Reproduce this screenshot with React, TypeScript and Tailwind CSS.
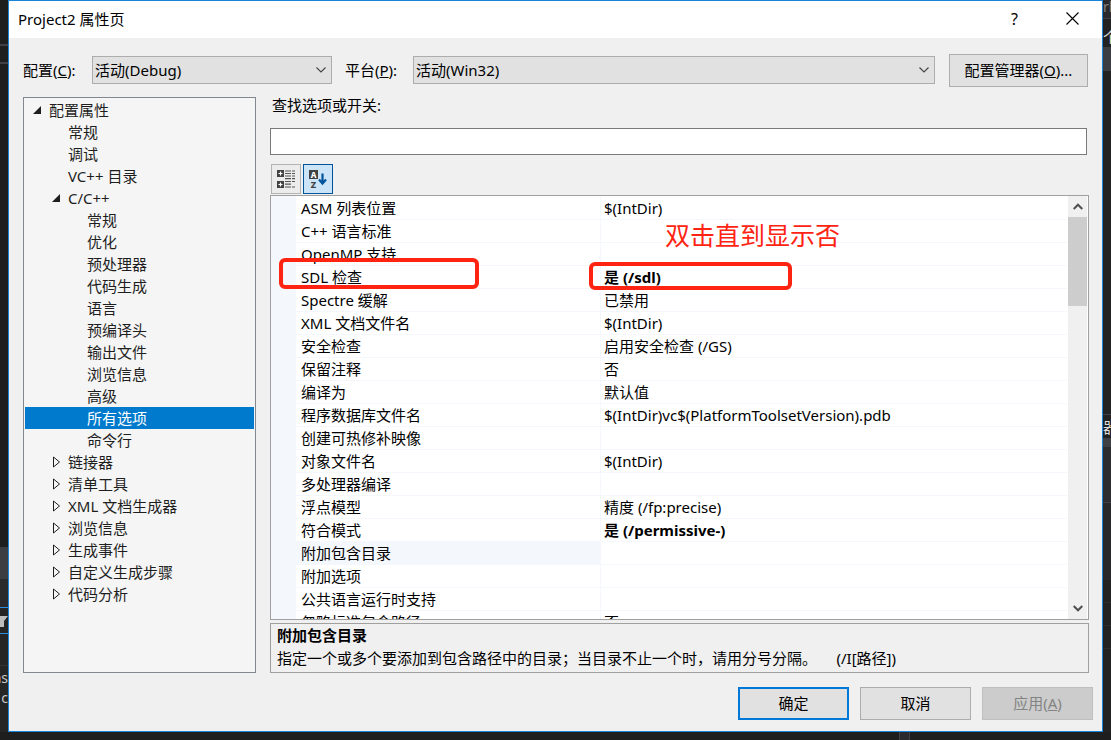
import { useState } from "react";
import { clsx } from "clsx";

type TreeItem = { label: string; level: 0 | 1 | 2; state?: "open" | "closed" };
type Property = { name: string; value: string; changed?: boolean };

const TREE: TreeItem[] = [
  { label: "配置属性",       level: 0, state: "open" },
  { label: "常规",           level: 1 },
  { label: "调试",           level: 1 },
  { label: "VC++ 目录",      level: 1 },
  { label: "C/C++",          level: 1, state: "open" },
  { label: "常规",           level: 2 },
  { label: "优化",           level: 2 },
  { label: "预处理器",       level: 2 },
  { label: "代码生成",       level: 2 },
  { label: "语言",           level: 2 },
  { label: "预编译头",       level: 2 },
  { label: "输出文件",       level: 2 },
  { label: "浏览信息",       level: 2 },
  { label: "高级",           level: 2 },
  { label: "所有选项",       level: 2 },
  { label: "命令行",         level: 2 },
  { label: "链接器",         level: 1, state: "closed" },
  { label: "清单工具",       level: 1, state: "closed" },
  { label: "XML 文档生成器", level: 1, state: "closed" },
  { label: "浏览信息",       level: 1, state: "closed" },
  { label: "生成事件",       level: 1, state: "closed" },
  { label: "自定义生成步骤", level: 1, state: "closed" },
  { label: "代码分析",       level: 1, state: "closed" },
];

const PROPERTIES: Property[] = [
  { name: "ASM 列表位置",       value: "$(IntDir)" },
  { name: "C++ 语言标准",       value: "" },
  { name: "OpenMP 支持",        value: "" },
  { name: "SDL 检查",           value: "是 (/sdl)", changed: true },
  { name: "Spectre 缓解",       value: "已禁用" },
  { name: "XML 文档文件名",     value: "$(IntDir)" },
  { name: "安全检查",           value: "启用安全检查 (/GS)" },
  { name: "保留注释",           value: "否" },
  { name: "编译为",             value: "默认值" },
  { name: "程序数据库文件名",   value: "$(IntDir)vc$(PlatformToolsetVersion).pdb" },
  { name: "创建可热修补映像",   value: "" },
  { name: "对象文件名",         value: "$(IntDir)" },
  { name: "多处理器编译",       value: "" },
  { name: "浮点模型",           value: "精度 (/fp:precise)" },
  { name: "符合模式",           value: "是 (/permissive-)", changed: true },
  { name: "附加包含目录",       value: "" },
  { name: "附加选项",           value: "" },
  { name: "公共语言运行时支持", value: "" },
  { name: "忽略标准包含路径",   value: "否" },
];

const INDENT = ["pl-[7px]", "pl-[26px]", "pl-[45px]"];

function TreeArrow({ state }: { state?: "open" | "closed" }) {
  return (
    <svg width="10" height="12" viewBox="0 0 10 12" className="shrink-0" aria-hidden="true">
      {state === "open" && <path d="M9 2v8H1z" fill="#1e1e1e" />}
      {state === "closed" && <path d="M2.500 1v10l6-5z" fill="none" stroke="#1e1e1e" />}
    </svg>
  );
}

function Chevron({ className }: { className?: string }) {
  return (
    <svg width="10" height="6" viewBox="0 0 10 6" className={className} aria-hidden="true">
      <path d="M.5.5 5 5 9.500.5" fill="none" stroke="#444" strokeWidth="1.100" />
    </svg>
  );
}

function ComboBox({ id, value, className }: { id: string; value: string; className: string }) {
  return (
    <div className={clsx("relative mt-0.5", className)}>
      <select
        id={id}
        defaultValue={value}
        className="block h-7 w-full appearance-none border border-[#adadad] bg-[#e1e1e1] pl-0.5 pr-6 text-black"
      >
        <option>{value}</option>
      </select>
      <Chevron className="pointer-events-none absolute right-1.5 top-[11px]" />
    </div>
  );
}

function CategoryIcon() {
  return (
    <svg width="18" height="18" viewBox="0 0 18 18" aria-hidden="true">
      <path d="M0 0h7v7H0zM0 11h7v7H0z" fill="#424242" />
      <path d="M3.500 1.500v4M1.500 3.500h4M3.500 12.500v4M1.500 14.500h4" stroke="#fff" strokeWidth="1.200" />
      <path
        d="M8 1h6M8 3.500h6M8 6h6M8 8.700h6M8 11.500h6M8 14.200h6M8 17h6M15 1h3M15 3.500h3M15 6h3M15 8.700h3M15 11.500h3M15 17h3"
        stroke="#555"
        strokeWidth="1.200"
      />
    </svg>
  );
}

function SortIcon() {
  return (
    <svg width="18" height="20" viewBox="0 0 18 20" aria-hidden="true">
      <path d="M0 1h9v9H0z" fill="#424242" />
      <text x="4.500" y="8.500" textAnchor="middle" fontSize="8" fontWeight="800" fill="#fff">A</text>
      <text x="4.500" y="18.800" textAnchor="middle" fontSize="9" fontWeight="800" fill="#424242">Z</text>
      <path d="M13.500 4.500v9.500M10 10.500l3.500 4 3.500-4" fill="none" stroke="#00539c" strokeWidth="2.200" />
    </svg>
  );
}

function PropertyTree() {
  const [selected, setSelected] = useState(14);

  return (
    <ul role="tree" aria-label="配置属性" className="w-[233px] shrink-0 border border-[#828790] bg-[#f5f5f5] p-px text-[#1e1e1e]">
      {TREE.map((item, i) => (
        <li
          key={i}
          role="treeitem"
          aria-selected={i === selected}
          onClick={() => setSelected(i)}
          className={clsx(
            "flex h-[22px] cursor-default items-center gap-[7px]",
            INDENT[item.level],
            i === selected && "bg-[#007acc] text-white",
          )}
        >
          <TreeArrow state={item.state} />
          <span>{item.label}</span>
        </li>
      ))}
    </ul>
  );
}

function ScrollBar() {
  return (
    <div className="mr-px flex w-[19px] shrink-0 flex-col bg-[#f0f0f0]">
      <button type="button" aria-label="向上滚动" className="flex h-[21px] items-center justify-center">
        <svg width="10" height="7" viewBox="0 0 10 7" aria-hidden="true">
          <path d="M.7 6 5 1.700 9.300 6" fill="none" stroke="#505050" strokeWidth="2" />
        </svg>
      </button>
      <div className="h-[89px] bg-[#cdcdcd]" />
      <button type="button" aria-label="向下滚动" className="mt-auto flex h-[21px] items-center justify-center">
        <svg width="10" height="7" viewBox="0 0 10 7" aria-hidden="true">
          <path d="M.7 1 5 5.300 9.300 1" fill="none" stroke="#505050" strokeWidth="2" />
        </svg>
      </button>
    </div>
  );
}

function PropertyGrid() {
  const [current, setCurrent] = useState("附加包含目录");

  return (
    <div className="relative flex min-h-0 flex-1 border border-[#a0a0a0] bg-white">
      <div className="min-w-0 flex-1 overflow-hidden bg-[linear-gradient(to_right,#f4f7fc_25px,white_25px)] pr-px pt-px">
        <table aria-label="所有选项" className="w-full table-fixed border-separate border-spacing-0">
          <colgroup>
            <col className="w-[25px]" />
            <col className="w-[305px]" />
            <col />
          </colgroup>
          <tbody>
            {PROPERTIES.map((p) => (
              <tr key={p.name} className="h-[23px]" onClick={() => setCurrent(p.name)}>
                <td className="p-0" />
                <th
                  scope="row"
                  className={clsx(
                    "border-b border-r border-[#f4f7fc] py-0 pl-[5px] text-left font-normal leading-[22px]",
                    p.name === current && "bg-[#f4f7fc]",
                  )}
                >
                  {p.name}
                </th>
                <td className={clsx("border-b border-[#f4f7fc] py-0 pl-[3px] leading-[22px]", p.changed && "font-bold")}>
                  {p.value}
                </td>
              </tr>
            ))}
          </tbody>
        </table>
      </div>
      <ScrollBar />

      {/* Hand-drawn notes on top of the grid */}
      <div className="pointer-events-none absolute left-2 top-[62px] h-[31px] w-[200px] rounded-md border-4 border-[#ff2412]" />
      <div className="pointer-events-none absolute left-[318px] top-[66px] h-7 w-[203px] rounded-md border-4 border-[#ff2412]" />
      <p className="pointer-events-none absolute left-[394px] top-[23px] text-[25px] leading-8 text-[#ff2412]">双击直到显示否</p>
    </div>
  );
}

function DialogButton({ children, className, disabled }: { children: React.ReactNode; className: string; disabled?: boolean }) {
  return (
    <button type="button" disabled={disabled} className={clsx("h-[33px] w-[111px] pb-0.5", className)}>
      {children}
    </button>
  );
}

// Slices of the editor that show beside the dialog
function EditorLeft() {
  return (
    <div className="flex w-2 shrink-0 flex-col overflow-hidden bg-[#1e1e1e] text-[#c8c8c8]">
      <div className="h-11" />
      <div className="h-5 border-y-2 border-[#3f3f46]" />
      <div className="h-[483px]" />
      <div className="h-8 bg-[#3c3c43]" />
      <div className="h-7 bg-[#2a2a2c]" />
      <div className="flex h-[27px] items-center border-y border-[#2d8fe2] bg-[#252526]">
        <svg width="8" height="12" viewBox="0 0 8 12" aria-hidden="true">
          <path d="M0 1h8L4 6v6H0V5z" fill="#bdbdbd" />
        </svg>
      </div>
      <div className="h-8 border-b border-[#333337] bg-[#252526]" />
      <div className="flex flex-1 flex-col items-end bg-[#252526] pt-0.5 text-sm leading-5">
        <span>ns</span>
        <span>c</span>
      </div>
    </div>
  );
}

function EditorRight() {
  return (
    <div className="flex w-2 shrink-0 flex-col overflow-hidden bg-[#222222] text-[#dcdcdc]">
      <div className="h-[19px] border-b border-[#3f3f46] bg-[#2a2a2c] text-sm leading-[14px] text-[#8a8078]">rl</div>
      <div className="h-7 whitespace-nowrap pt-2 leading-5">个</div>
      <div className="h-6 bg-[#3c3c43]" />
      <div className="h-[343px]" />
      <div className="h-6 whitespace-nowrap border-t border-[#3f3f46] leading-6">器</div>
      <div className="h-[9px] bg-[#3f3f46]" />
      <div className="h-14 border-b border-[#3f3f46] bg-[#2d2d30]" />
      <div className="h-[77px] bg-[#28282b]" />
      <div className="h-[23px] border-b border-[#2d2d30]" />
      <div className="h-[23px] border-b border-[#2d2d30]" />
      <div className="h-[23px] border-b border-[#2d2d30]" />
    </div>
  );
}

export default function App() {
  return (
    <div className="flex h-screen flex-col bg-[#1e1e1e] font-['Noto_Sans','Noto_Sans_CJK_SC',sans-serif] text-[15px] leading-5 text-black">
      <div className="flex min-h-0 flex-1">
        <EditorLeft />

        <main className="flex min-w-0 flex-1 flex-col border border-[#1883d7] bg-[#f0f0f0]">
          <header className="flex h-[37px] shrink-0 items-center bg-white pb-0.5 pl-[9px]">
            <h1 className="flex-1">Project2 属性页</h1>
            <button type="button" aria-label="帮助" className="w-[57px] text-base">?</button>
            <button type="button" aria-label="关闭" className="flex w-[59px] justify-center">
              <svg width="13" height="13" viewBox="0 0 13 13" aria-hidden="true">
                <path d="M.5.5l12 12M12.500.5l-12 12" stroke="#000" strokeWidth="1.100" />
              </svg>
            </button>
          </header>

          <div className="flex shrink-0 items-start px-3.5 pt-4">
            <label htmlFor="configuration" className="w-[69px] leading-8">配置(<u>C</u>):</label>
            <ComboBox id="configuration" value="活动(Debug)" className="w-60" />
            <label htmlFor="platform" className="w-[81px] pl-[13px] leading-8">平台(<u>P</u>):</label>
            <ComboBox id="platform" value="活动(Win32)" className="flex-1" />
            <button type="button" className="ml-3.5 h-[33px] w-[139px] border border-[#adadad] bg-[#e1e1e1] pb-0.5">
              配置管理器(<u>O</u>)...
            </button>
          </div>

          <div className="flex min-h-0 flex-1 gap-3.5 pl-3.5 pr-[13px] pt-2.5">
            <PropertyTree />

            <div className="flex min-w-0 flex-1 flex-col">
              <label htmlFor="search" className="h-[31px] pl-0.5 leading-4">查找选项或开关:</label>
              <input id="search" type="text" className="mr-0.5 h-[27px] border border-[#7a7a7a] bg-white px-1" />

              <div className="flex gap-0.5 pb-px pl-px pt-[9px]">
                <button type="button" aria-label="按类别" className="flex size-[30px] items-center justify-center border border-[#b4b4b4] bg-[#ececec]">
                  <CategoryIcon />
                </button>
                <button type="button" aria-label="按字母顺序" className="flex size-[30px] items-center justify-center border border-[#005499] bg-[#cce4f7]">
                  <SortIcon />
                </button>
              </div>

              <PropertyGrid />

              <section className="mt-[3px] h-[50px] shrink-0 border border-[#a0a0a0] pl-1.5 pt-px">
                <h2 className="font-bold">附加包含目录</h2>
                <p className="whitespace-pre pt-[3px]">指定一个或多个要添加到包含路径中的目录；当目录不止一个时，请用分号分隔。     (/I[路径])</p>
              </section>
            </div>
          </div>

          <footer className="flex shrink-0 justify-end gap-[11px] pb-[11px] pr-[9px] pt-3.5">
            <DialogButton className="border-2 border-[#0078d7] bg-[#e1e1e1]">确定</DialogButton>
            <DialogButton className="border border-[#adadad] bg-[#e1e1e1]">取消</DialogButton>
            <DialogButton disabled className="border border-[#bfbfbf] bg-[#cccccc] text-[#838383]">应用(<u>A</u>)</DialogButton>
          </footer>
        </main>

        <EditorRight />
      </div>

      <div className="flex h-2 shrink-0 justify-end pr-[201px]">
        <div className="w-[11px] border-x border-[#3f3f46] bg-[#2a2a2c]" />
      </div>
    </div>
  );
}
